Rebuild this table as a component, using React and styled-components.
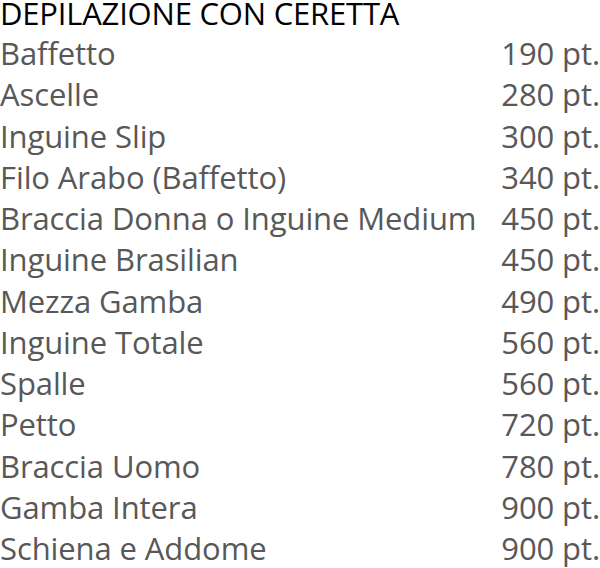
import React from "react";
import styled, { createGlobalStyle } from "styled-components";

const GlobalStyle = createGlobalStyle`
  html, body {
    margin: 0;
    padding: 0;
    background: #fff;
  }
`;

const items = [
  ["Baffetto", "190 pt."],
  ["Ascelle", "280 pt."],
  ["Inguine Slip", "300 pt."],
  ["Filo Arabo (Baffetto)", "340 pt."],
  ["Braccia Donna o Inguine Medium", "450 pt."],
  ["Inguine Brasilian", "450 pt."],
  ["Mezza Gamba", "490 pt."],
  ["Inguine Totale", "560 pt."],
  ["Spalle", "560 pt."],
  ["Petto", "720 pt."],
  ["Braccia Uomo", "780 pt."],
  ["Gamba Intera", "900 pt."],
  ["Schiena e Addome", "900 pt."],
];

const Wrapper = styled.div`
  width: 600px;
  font-family: "Open Sans", "Liberation Sans", sans-serif;
`;

const Title = styled.h1`
  margin: 0 0 7px;
  font-size: 31px;
  font-weight: 400;
  line-height: 26px;
  color: #000;
  letter-spacing: -0.2px;
  white-space: nowrap;
`;

const List = styled.div`
  display: grid;
  grid-template-columns: 1fr auto;
`;

const Cell = styled.div`
  font-size: 31px;
  line-height: 41.25px;
  color: #585858;
  letter-spacing: -0.1px;
  white-space: nowrap;
  text-align: ${(p) => (p.$right ? "right" : "left")};
`;

export default function App() {
  return (
    <Wrapper>
      <GlobalStyle />
      <Title>DEPILAZIONE CON CERETTA</Title>
      <List>
        {items.map(([name, price]) => (
          <React.Fragment key={name}>
            <Cell>{name}</Cell>
            <Cell $right>{price}</Cell>
          </React.Fragment>
        ))}
      </List>
    </Wrapper>
  );
}
